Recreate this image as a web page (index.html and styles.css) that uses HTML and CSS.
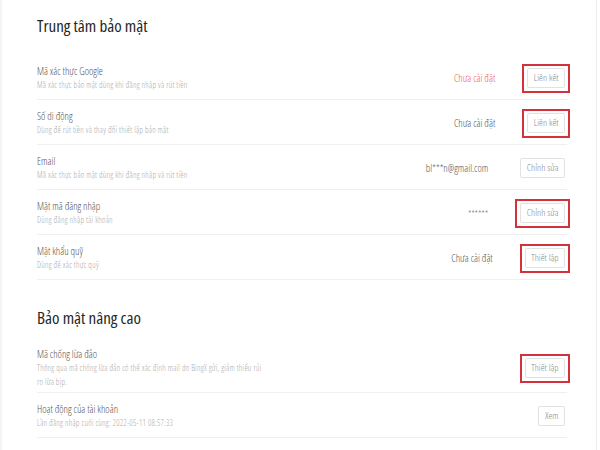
FILE: index.html
```html
<!DOCTYPE html>
<html lang="vi">
<head>
<meta charset="utf-8">
<title>Trung tâm bảo mật</title>
<link rel="stylesheet" href="styles.css">
</head>
<body>
<div class="frame">
  <section class="section">
    <h2 class="heading">Trung tâm bảo mật</h2>
    <div class="row">
      <div class="info">
        <div class="title">Mã xác thực Google</div>
        <div class="sub">Mã xác thực bảo mật dùng khi đăng nhập và rút tiền</div>
      </div>
      <div class="actions">
        <span class="status status-red">Chưa cài đặt</span>
        <button class="btn mark">Liên kết</button>
      </div>
    </div>
    <div class="row">
      <div class="info">
        <div class="title">Số di động</div>
        <div class="sub">Dùng để rút tiền và thay đổi thiết lập bảo mật</div>
      </div>
      <div class="actions">
        <span class="status">Chưa cài đặt</span>
        <button class="btn mark">Liên kết</button>
      </div>
    </div>
    <div class="row">
      <div class="info">
        <div class="title">Email</div>
        <div class="sub">Mã xác thực bảo mật dùng khi đăng nhập và rút tiền</div>
      </div>
      <div class="actions">
        <span class="status">bl***n@gmail.com</span>
        <button class="btn">Chỉnh sửa</button>
      </div>
    </div>
    <div class="row">
      <div class="info">
        <div class="title">Mật mã đăng nhập</div>
        <div class="sub">Dùng đăng nhập tài khoản</div>
      </div>
      <div class="actions">
        <span class="status status-stars">******</span>
        <button class="btn mark">Chỉnh sửa</button>
      </div>
    </div>
    <div class="row">
      <div class="info">
        <div class="title">Mật khẩu quỹ</div>
        <div class="sub">Dùng để xác thực quỹ</div>
      </div>
      <div class="actions">
        <span class="status">Chưa cài đặt</span>
        <button class="btn mark">Thiết lập</button>
      </div>
    </div>
  </section>
  <section class="section section-adv">
    <h2 class="heading">Bảo mật nâng cao</h2>
    <div class="row row-wrap">
      <div class="info">
        <div class="title">Mã chống lừa đảo</div>
        <div class="sub">Thông qua mã chống lừa đảo có thể xác định mail do BingX gửi, giảm thiểu rủi ro lừa bịp.</div>
      </div>
      <div class="actions">
        <button class="btn mark">Thiết lập</button>
      </div>
    </div>
    <div class="row">
      <div class="info">
        <div class="title">Hoạt động của tài khoản</div>
        <div class="sub">Lần đăng nhập cuối cùng: 2022-05-11 08:57:33</div>
      </div>
      <div class="actions">
        <button class="btn">Xem</button>
      </div>
    </div>
  </section>
</div>
</body>
</html>
```

FILE: styles.css
```css
html, body {
  margin: 0;
  padding: 0;
  background: #ffffff;
}

body {
  font-family: "Open Sans", "Noto Sans", sans-serif;
  font-stretch: 75%;
  font-weight: 300;
  color: #555;
}

.frame {
  box-sizing: border-box;
  width: 597px;
  height: 450px;
  border-left: 2px solid #f4f4f4;
  border-right: 1px solid #ececec;
  padding: 14px 29px 0 35px;
  overflow: hidden;
}

.heading {
  margin: 0;
  font-size: 17px;
  line-height: 24px;
  font-weight: 400;
  color: #262626;
}

.section .heading {
  margin-bottom: 17px;
}

.section-adv {
  margin-top: 26px;
}

.section-adv .heading {
  margin-bottom: 8px;
}

.row {
  display: flex;
  align-items: center;
  padding: 9px 2px 7px 0;
  border-bottom: 1px solid #efefef;
}

.row-wrap {
  padding-bottom: 3px;
}

.info {
  flex: 1;
  min-width: 0;
}

.title {
  font-size: 10.3px;
  line-height: 14px;
  color: #555;
}

.sub {
  font-size: 8.2px;
  letter-spacing: 0.25px;
  line-height: 14px;
  color: #aaa;
  max-width: 226px;
}

.actions {
  display: flex;
  align-items: center;
  gap: 32px;
}

.status {
  font-size: 10.3px;
  color: #555;
}

.status-red {
  color: #f25a5a;
}

.status-stars {
  font-size: 8.5px;
  letter-spacing: 0.3px;
}

.btn {
  position: relative;
  font-family: inherit;
  font-stretch: inherit;
  font-weight: 300;
  font-size: 9.8px;
  height: 20px;
  line-height: 18px;
  padding: 0 5.5px;
  border: 1px solid #e2e2e2;
  border-radius: 2px;
  background: #fff;
  color: #888;
}

.mark::after {
  content: "";
  position: absolute;
  left: -6px;
  right: -6px;
  top: -5px;
  bottom: -6px;
  border: 2px solid #d3313b;
  pointer-events: none;
}
```
